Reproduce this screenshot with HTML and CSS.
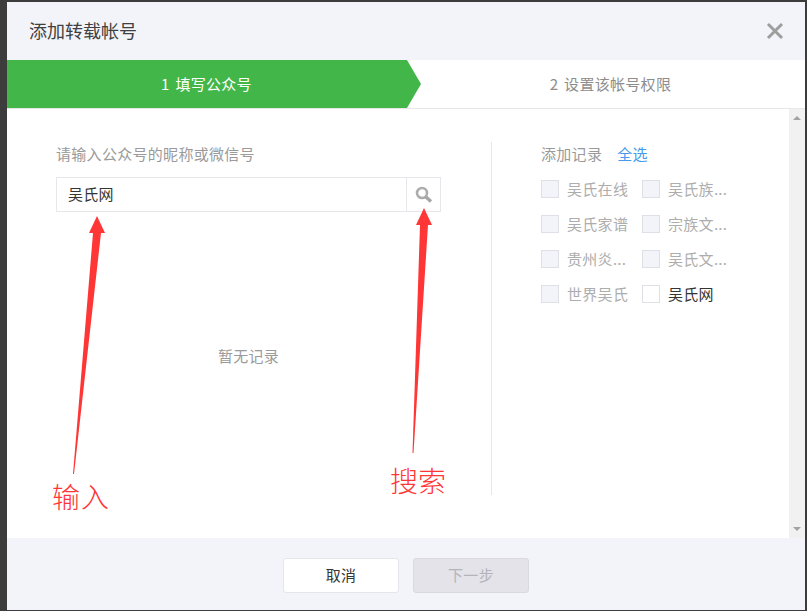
FILE: index.html
```html
<!DOCTYPE html>
<html lang="zh-CN">
<head>
    <meta charset="UTF-8">
    <title>添加转载帐号</title>
    <link rel="stylesheet" href="styles.css">
</head>
<body>
    <div class="dialog">
        <!-- 标题 -->
        <div class="dialog-head">
            <h3>添加转载帐号</h3>
            <svg class="close-icon" width="18" height="18" viewBox="0 0 18 18">
                <path d="M2 2L16 16M16 2L2 16" stroke="#9e9e9e" stroke-width="3" fill="none"/>
            </svg>
        </div>

        <!-- 步骤条 -->
        <div class="steps">
            <div class="step step-current">1 填写公众号</div>
            <div class="step">2 设置该帐号权限</div>
        </div>

        <!-- 内容 -->
        <div class="dialog-body">
            <div class="main">
                <div class="search-col">
                    <p class="search-label">请输入公众号的昵称或微信号</p>
                    <div class="search-box">
                        <input class="search-input" type="text" value="吴氏网">
                        <button class="search-btn">
                            <svg width="18" height="18" viewBox="0 0 18 18">
                                <circle cx="7" cy="7" r="5" stroke="#adadad" stroke-width="2.6" fill="none"/>
                                <path d="M11 11L16 15.5" stroke="#a6a6a6" stroke-width="3.4" fill="none"/>
                            </svg>
                        </button>
                    </div>
                    <p class="empty-text">暂无记录</p>
                </div>
                <div class="record-col">
                    <div class="record-head">
                        <span>添加记录</span>
                        <a class="select-all">全选</a>
                    </div>
                    <div class="record-list">
                        <div class="record disabled"><i class="check"></i><span>吴氏在线</span></div>
                        <div class="record disabled"><i class="check"></i><span>吴氏族...</span></div>
                        <div class="record disabled"><i class="check"></i><span>吴氏家谱</span></div>
                        <div class="record disabled"><i class="check"></i><span>宗族文...</span></div>
                        <div class="record disabled"><i class="check"></i><span>贵州炎...</span></div>
                        <div class="record disabled"><i class="check"></i><span>吴氏文...</span></div>
                        <div class="record disabled"><i class="check"></i><span>世界吴氏</span></div>
                        <div class="record"><i class="check"></i><span>吴氏网</span></div>
                    </div>
                </div>
            </div>
            <div class="scrollbar">
                <i class="arrow-up"></i>
                <i class="arrow-down"></i>
            </div>
        </div>

        <!-- 底部按钮 -->
        <div class="dialog-foot">
            <button class="btn">取消</button>
            <button class="btn btn-disabled">下一步</button>
        </div>
    </div>

    <!-- 截图上的红色标注 -->
    <svg class="marks" width="807" height="611" viewBox="0 0 807 611">
        <polygon points="97,216 105,233 101,233 74,474 73,474 93,233 89,233" fill="#ff3636"/>
        <polygon points="424,208 432,225 428,225 413.5,453 412.5,453 420,225 416,225" fill="#ff3636"/>
    </svg>
    <span class="mark-text mark-input">输入</span>
    <span class="mark-text mark-search">搜索</span>
</body>
</html>
```

FILE: styles.css
```css
/* 基础样式 */
* {
    box-sizing: border-box;
}

html, body {
    height: 611px;
}

body {
    margin: 0;
    padding: 2px 2px 1px 7px;
    background: #3c3c3c;
    font-family: "Noto Sans CJK SC", "Liberation Sans", sans-serif;
    font-size: 15px;
    letter-spacing: 0.3px;
    overflow: hidden;
}

p, h3 {
    margin: 0;
    font-weight: normal;
}

/* 弹窗 */
.dialog {
    height: 608px;
    display: flex;
    flex-direction: column;
    background: #fff;
}

.dialog-head {
    height: 58px;
    flex: none;
    display: flex;
    align-items: center;
    justify-content: space-between;
    padding: 0 22px;
    background: #f3f4f9;
}

.dialog-head h3 {
    padding-bottom: 2px;
    font-size: 18px;
    letter-spacing: 0;
    color: #404040;
}

.close-icon {
    margin-right: -1px;
}

/* 步骤条 */
.steps {
    height: 49px;
    flex: none;
    display: flex;
    border-bottom: 1px solid #e7e7eb;
}

.step {
    flex: 1;
    display: flex;
    align-items: center;
    justify-content: center;
    padding: 0 5px 2px 0;
    word-spacing: 2px;
    color: #8d8d8d;
}

.step-current {
    flex: none;
    width: 414px;
    padding: 0 15px 2px 0;
    background: #43b649;
    color: #fff;
    clip-path: polygon(0 0, 400px 0, 100% 50%, 400px 100%, 0 100%);
}

/* 内容 */
.dialog-body {
    flex: 1;
    display: flex;
    min-height: 0;
}

.main {
    flex: 1;
    display: flex;
    align-items: flex-start;
    padding: 33px 0 0 49px;
}

.search-col {
    width: 385px;
    margin-right: 50px;
}

.search-label {
    line-height: 24px;
    margin-bottom: 11px;
    color: #9a9a9a;
}

.search-box {
    display: flex;
    height: 35px;
    border: 1px solid #e7e7eb;
}

.search-input {
    flex: 1;
    min-width: 0;
    padding: 0 11px 2px;
    border: 0;
    outline: 0;
    font: inherit;
    letter-spacing: inherit;
    color: #353535;
}

.search-btn {
    width: 34px;
    padding: 0;
    display: flex;
    align-items: center;
    justify-content: center;
    border: 0;
    border-left: 1px solid #e7e7eb;
    background: #fff;
}

.empty-text {
    margin-top: 133px;
    line-height: 22px;
    text-align: center;
    color: #9a9a9a;
}

.record-col {
    width: 250px;
    height: 353px;
    padding-left: 49px;
    border-left: 1px solid #e7e7eb;
}

.record-head {
    display: flex;
    gap: 15px;
    height: 26px;
    line-height: 24px;
    color: #9a9a9a;
}

.select-all {
    color: #459ae9;
}

.record-list {
    display: grid;
    grid-template-columns: 101px 101px;
    row-gap: 17px;
    margin-top: 12px;
}

.record {
    height: 18px;
    display: flex;
    align-items: center;
    gap: 8px;
    white-space: nowrap;
    color: #353535;
}

.record span {
    margin-bottom: 2px;
}

.check {
    width: 18px;
    height: 18px;
    flex: none;
    border: 1px solid #dfe0e6;
    background: #fff;
}

.record.disabled {
    color: #adadad;
}

.record.disabled .check {
    background: #f3f4f9;
}

/* 滚动条 */
.scrollbar {
    width: 16px;
    flex: none;
    display: flex;
    flex-direction: column;
    justify-content: space-between;
    align-items: center;
    padding: 7px 0;
    background: #f1f1f1;
}

.arrow-up, .arrow-down {
    width: 0;
    height: 0;
    border-left: 4px solid transparent;
    border-right: 4px solid transparent;
}

.arrow-up {
    border-bottom: 4px solid #a3a3a3;
}

.arrow-down {
    border-top: 4px solid #a3a3a3;
}

/* 底部按钮 */
.dialog-foot {
    height: 72px;
    flex: none;
    display: flex;
    justify-content: center;
    gap: 14px;
    padding-top: 20px;
    background: #f3f4f9;
}

.btn {
    width: 116px;
    height: 35px;
    padding: 0 0 2px;
    border: 1px solid #e4e6eb;
    border-radius: 3px;
    background: #fff;
    font: inherit;
    letter-spacing: inherit;
    color: #353535;
}

.btn-disabled {
    background: #e3e3e9;
    border-color: #d9d9df;
    color: #b3b3ba;
}

/* 红色标注 */
.marks {
    position: absolute;
    top: 0;
    left: 0;
    pointer-events: none;
}

.mark-text {
    position: absolute;
    font-size: 28px;
    font-weight: 300;
    line-height: 28px;
    letter-spacing: 0;
    color: #ff3636;
}

.mark-input {
    left: 52px;
    top: 482px;
    letter-spacing: 1px;
}

.mark-search {
    left: 390px;
    top: 466px;
}
```
